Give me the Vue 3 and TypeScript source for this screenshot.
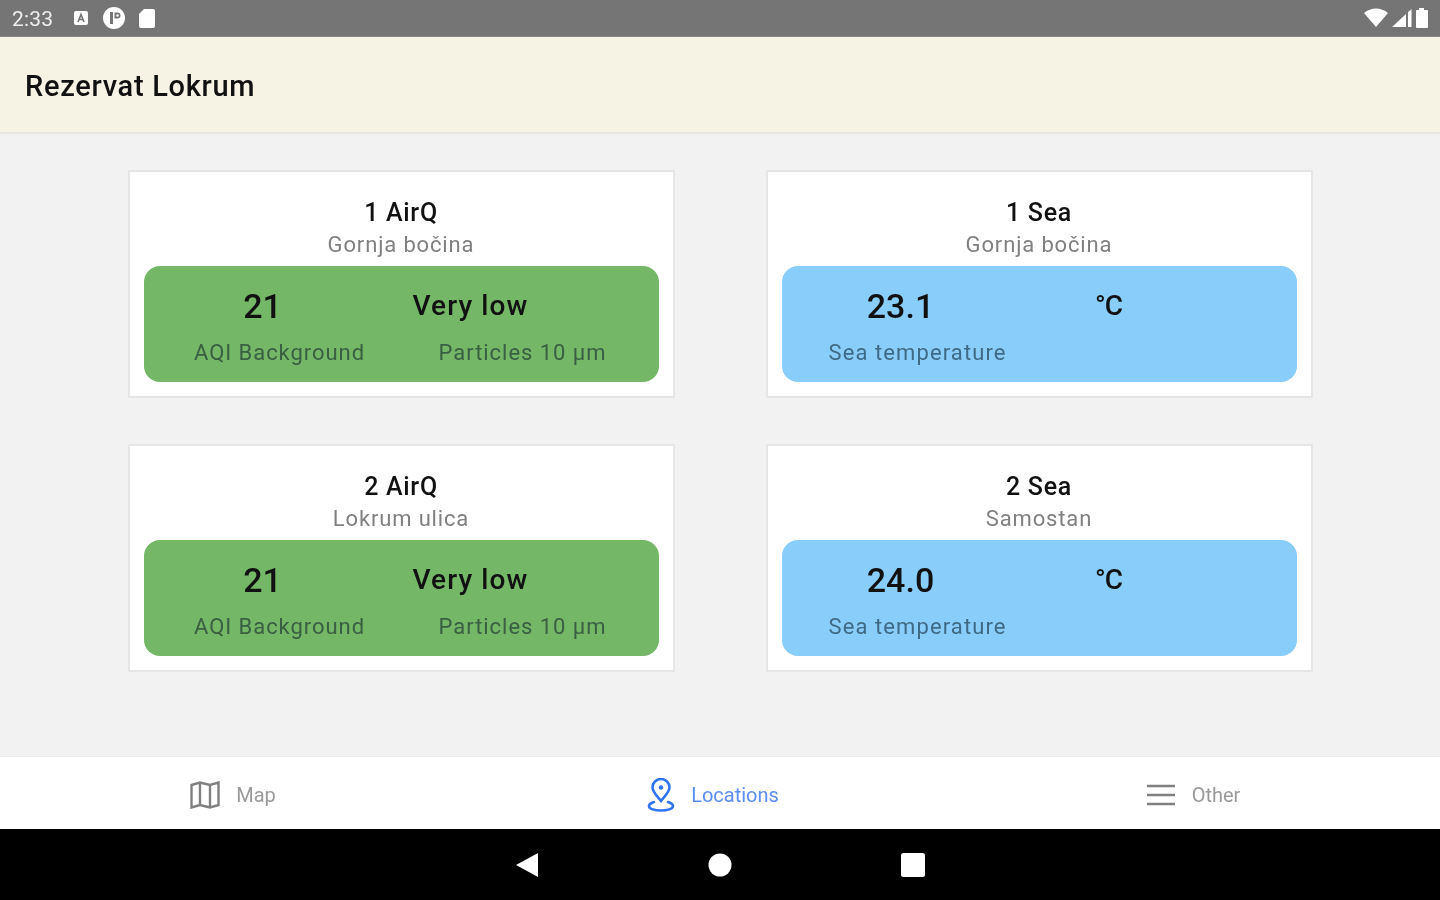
<script setup lang="ts">
type Card = {
  title: string
  place: string
  kind: 'air' | 'sea'
  value: string
  second: string
  label: string
  secondLabel: string
}

const cards: Card[] = [
  { title: '1 AirQ', place: 'Gornja bočina', kind: 'air', value: '21', second: 'Very low', label: 'AQI Background', secondLabel: 'Particles 10 µm' },
  { title: '1 Sea', place: 'Gornja bočina', kind: 'sea', value: '23.1', second: '°C', label: 'Sea temperature', secondLabel: '' },
  { title: '2 AirQ', place: 'Lokrum ulica', kind: 'air', value: '21', second: 'Very low', label: 'AQI Background', secondLabel: 'Particles 10 µm' },
  { title: '2 Sea', place: 'Samostan', kind: 'sea', value: '24.0', second: '°C', label: 'Sea temperature', secondLabel: '' },
]
</script>

<template>
  <div class="screen">
    <div class="status">
      <div class="status-left">
        <span class="time">2:33</span>
        <svg width="16" height="16" viewBox="0 0 16 16"><rect x="1" y="1" width="14" height="14" rx="2" fill="#fff"/><path d="M5 12 8 4.500 11 12M6.200 9.500h3.600" fill="none" stroke="#757575" stroke-width="1.600"/></svg>
        <svg width="24" height="24" viewBox="0 0 24 24"><circle cx="12" cy="12" r="11" fill="#fff"/><path d="M9.500 6v12" stroke="#757575" stroke-width="3"/><path d="M12.500 6.500h3a3 3 0 0 1 0 6h-3z" fill="#757575"/><circle cx="15.500" cy="9.500" r="1.200" fill="#fff"/></svg>
        <svg width="18" height="20" viewBox="0 0 18 20"><path d="M6 1h9a2 2 0 0 1 2 2v15a2 2 0 0 1-2 2H3a2 2 0 0 1-2-2V6z" fill="#fff"/></svg>
      </div>
      <div class="status-right">
        <svg width="26" height="20" viewBox="0 0 26 20"><path d="M1 5C8-1 18-1 25 5L13 19z" fill="#fff"/></svg>
        <svg width="20" height="18" viewBox="0 0 20 18"><path d="M0 18 14 5v13zM16 3.200 19.500 0v18H16z" fill="#fff"/></svg>
        <svg width="14" height="20" viewBox="0 0 14 20"><path d="M4 0h5v2h3a1 1 0 0 1 1 1v16a1 1 0 0 1-1 1H2a1 1 0 0 1-1-1V3a1 1 0 0 1 1-1h2z" fill="#fff"/></svg>
      </div>
    </div>

    <header class="appbar">Rezervat Lokrum</header>

    <main class="content">
      <section v-for="c in cards" :key="c.title" class="card">
        <h2 class="card-title">{{ c.title }}</h2>
        <p class="card-place">{{ c.place }}</p>
        <div class="panel" :class="c.kind">
          <div class="row-values">
            <span class="value">{{ c.value }}</span>
            <span class="second" :class="{ unit: c.kind === 'sea' }">{{ c.second }}</span>
          </div>
          <div class="row-labels">
            <span>{{ c.label }}</span>
            <span>{{ c.secondLabel }}</span>
          </div>
        </div>
      </section>
    </main>

    <nav class="tabs">
      <div class="tab">
        <svg width="30" height="28" viewBox="0 0 30 28" fill="none" stroke="#808080" stroke-width="2.400"><path d="M1.500 4 10 1.500l10 2.500 8.500-2.500V24L20 26.500 10 24l-8.500 2.500zM10 1.500V24M20 4v22.500"/></svg>
        <span>Map</span>
      </div>
      <div class="tab active">
        <svg width="28" height="34" viewBox="0 0 28 34" fill="none" stroke="#2f74f0" stroke-width="2.600"><path d="M14 23C9 17 5.500 13.500 5.500 9.500a8.500 8.500 0 0 1 17 0C22.500 13.500 19 17 14 23z"/><circle cx="14" cy="9.500" r="2.200" fill="#2f74f0" stroke="none"/><path d="M7 24c-3 1-5 2.500-5 4 0 3 6 4.500 12 4.500s12-1.500 12-4.500c0-1.500-2-3-5-4" stroke-linecap="round"/></svg>
        <span>Locations</span>
      </div>
      <div class="tab">
        <svg width="30" height="22" viewBox="0 0 30 22" stroke="#808080" stroke-width="2.600"><path d="M1 2h28M1 11h28M1 20h28"/></svg>
        <span>Other</span>
      </div>
    </nav>

    <div class="sysnav">
      <svg width="24" height="26" viewBox="0 0 24 26"><path d="M1 13 23 1v24z" fill="#fff"/></svg>
      <svg width="24" height="24" viewBox="0 0 24 24"><circle cx="12" cy="12" r="11.500" fill="#fff"/></svg>
      <svg width="24" height="24" viewBox="0 0 24 24"><rect width="24" height="24" rx="2.500" fill="#fff"/></svg>
    </div>
  </div>
</template>

<style>
html, body { margin: 0; background: #f2f2f2; }
</style>

<style scoped>
.screen {
  width: 1440px;
  height: 900px;
  display: flex;
  flex-direction: column;
  overflow: hidden;
  font-family: Roboto, "Liberation Sans", sans-serif;
  background: #f2f2f2;
  filter: blur(0.6px);
}
.status {
  height: 36px;
  flex: none;
  background: #757575;
  display: flex;
  align-items: center;
  justify-content: space-between;
  padding: 0 11px 0 12px;
  border-bottom: 1px solid #8a8a8a;
}
.status-left, .status-right { display: flex; align-items: center; }
.status-left { gap: 12px; }
.status-right { gap: 3px; }
.time { color: #eee; font-size: 21px; margin-right: 8px; padding-top: 2px; letter-spacing: 0.2px; }
.status-left svg:nth-of-type(2) { margin-left: 1px; }
.appbar {
  height: 97px;
  flex: none;
  box-sizing: border-box;
  display: flex;
  align-items: center;
  padding: 2px 0 0 25px;
  background: #f7f3e4;
  border-bottom: 2px solid #e6e6e2;
  color: #111;
  font-size: 29px;
  font-weight: 500;
  letter-spacing: 0.7px;
}
.content {
  flex: 1;
  display: grid;
  grid-template-columns: 547px 547px;
  justify-content: center;
  align-content: start;
  column-gap: 91px;
  row-gap: 46px;
  padding-top: 36px;
}
.card {
  height: 228px;
  box-sizing: border-box;
  background: #fff;
  border: 2px solid #e6e6e6;
  padding: 0 14px;
  text-align: center;
}
.card-title {
  margin: 25px 0 0;
  height: 32px;
  line-height: 32px;
  font-size: 25px;
  font-weight: 500;
  letter-spacing: 0.7px;
  color: #111;
}
.card-place {
  margin: 0 0 5px;
  height: 32px;
  line-height: 32px;
  font-size: 22px;
  letter-spacing: 0.85px;
  color: #808080;
}
.panel {
  height: 116px;
  border-radius: 16px;
}
.air { background: #74b767; }
.sea { background: #89cdfa; }
.row-values {
  display: grid;
  grid-template-columns: 238px 178px;
  padding-top: 18px;
  height: 44px;
  line-height: 44px;
  color: #111;
}
.value { font-size: 34px; font-weight: 500; }
.second { font-size: 28px; font-weight: 500; letter-spacing: 1.100px; }
.unit { letter-spacing: -1px; }
.row-labels {
  display: grid;
  grid-template-columns: 272px 214px;
  margin-top: 10px;
  font-size: 22px;
  line-height: 30px;
  letter-spacing: 0.95px;
  color: #3a5f42;
}
.sea .row-labels { color: #3f6a85; letter-spacing: 1.100px; }
.tabs {
  height: 73px;
  flex: none;
  background: #fff;
  display: grid;
  grid-template-columns: repeat(3, 1fr);
  border-top: 1px solid #ececec;
  box-sizing: border-box;
}
.tab {
  display: flex;
  align-items: center;
  justify-content: center;
  gap: 16px;
  padding: 4px 14px 0 0;
  font-size: 20px;
  color: #9a9a9a;
}
.active { color: #5b8df2; }
.sysnav {
  height: 71px;
  flex: none;
  background: #000;
  display: flex;
  align-items: center;
  justify-content: center;
  gap: 169px;
}
</style>
